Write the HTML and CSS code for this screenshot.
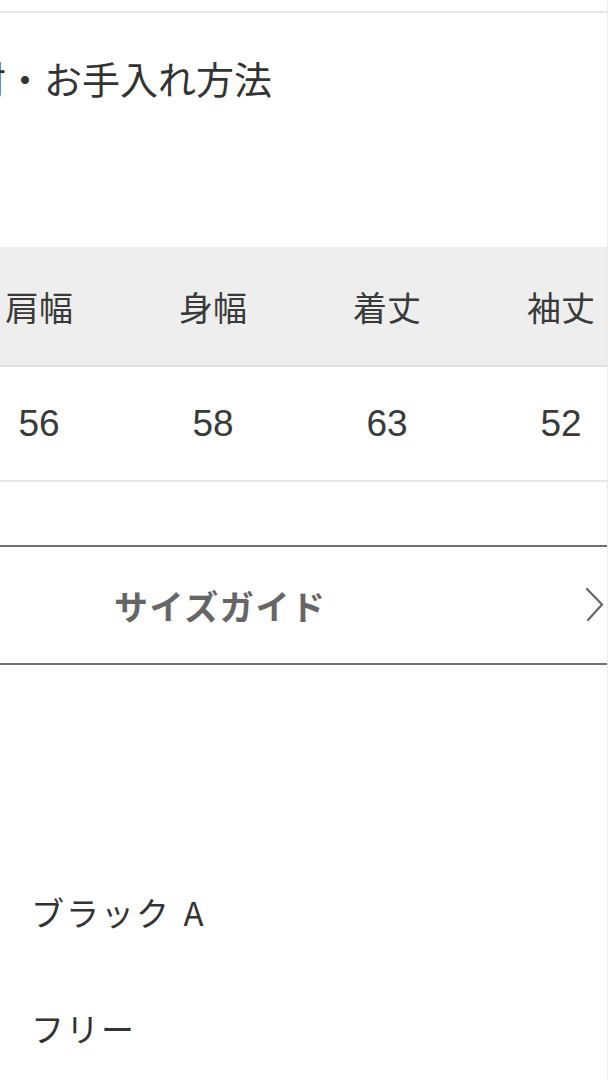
FILE: index.html
```html
<!DOCTYPE html>
<html lang="ja">
<head>
<meta charset="utf-8">
<title>素材・お手入れ方法</title>
<link rel="stylesheet" href="styles.css">
</head>
<body>
<div class="page">
  <div class="topline"></div>
  <h2 class="title">素材・お手入れ方法</h2>

  <div class="size-table">
    <div class="row head">
      <div class="cell">肩幅</div>
      <div class="cell">身幅</div>
      <div class="cell">着丈</div>
      <div class="cell">袖丈</div>
    </div>
    <div class="row body-row">
      <div class="cell num">56</div>
      <div class="cell num">58</div>
      <div class="cell num">63</div>
      <div class="cell num">52</div>
    </div>
  </div>

  <a class="guide" href="#">
    <span class="guide-label">サイズガイド</span>
    <svg class="chev" width="22" height="36" viewBox="0 0 22 36" aria-hidden="true">
      <path d="M3 2 L18 17.5 L4 33" fill="none" stroke="#666" stroke-width="2.2" stroke-linecap="round" stroke-linejoin="miter"/>
    </svg>
  </a>

  <ul class="info">
    <li class="info-item">ブラック A</li>
    <li class="info-item">フリー</li>
  </ul>
</div>
</body>
</html>
```

FILE: styles.css
```css
html, body {
  margin: 0;
  padding: 0;
  background: #fff;
}

body {
  font-family: "Noto Sans CJK JP", "Liberation Sans", sans-serif;
  color: #333;
  overflow: hidden;
}

.page {
  width: 607px;
  min-height: 1080px;
  border-right: 1px solid #ececec;
  overflow: hidden;
}

.topline {
  margin-top: 11px;
  height: 2px;
  background: #e8e8e8;
}

.title {
  margin: 37px 0 0 -70px;
  font-size: 38px;
  line-height: 56px;
  font-weight: 400;
  color: #333;
  white-space: nowrap;
}

.size-table {
  margin-top: 141px;
  margin-left: -48px;
  width: 696px;
}

.row {
  display: grid;
  grid-template-columns: repeat(4, 174px);
}

.head {
  height: 118px;
  background: #eeeeee;
  border-bottom: 2px solid #e0e0e0;
}

.body-row {
  height: 113px;
  border-bottom: 2px solid #e6e6e6;
}

.cell {
  display: flex;
  align-items: center;
  justify-content: center;
}

.head .cell {
  font-size: 34px;
  color: #3a3a3a;
}

.num {
  font-family: "Liberation Sans", Arial, sans-serif;
  font-size: 37px;
  color: #3a3a3a;
}

.guide {
  margin-top: 63px;
  display: flex;
  align-items: center;
  height: 116px;
  border-top: 2px solid #707070;
  border-bottom: 2px solid #707070;
  text-decoration: none;
}

.guide-label {
  padding-left: 114px;
  font-size: 34px;
  font-weight: 700;
  letter-spacing: 1.6px;
  color: #666;
}

.chev {
  margin-left: auto;
  margin-right: 1px;
  display: block;
}

.info {
  list-style: none;
  margin: 189px 0 0;
  padding: 0;
}

.info-item {
  height: 116px;
  display: flex;
  align-items: center;
  padding-left: 31px;
  font-size: 33px;
  letter-spacing: 2px;
  word-spacing: 3px;
  color: #333;
}
```
